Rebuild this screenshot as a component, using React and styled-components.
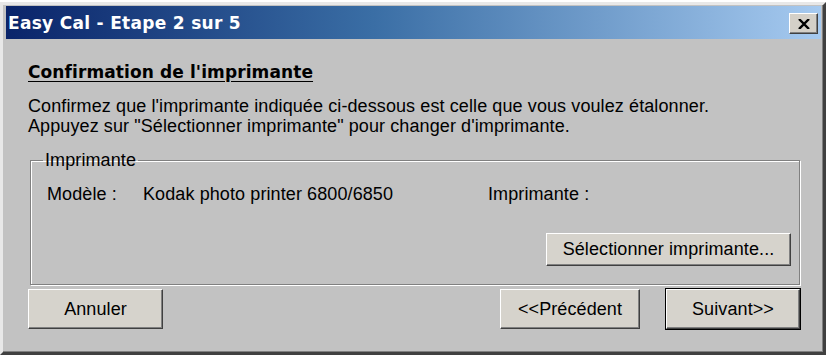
import React from 'react';
import styled, { createGlobalStyle } from 'styled-components';

const GlobalStyle = createGlobalStyle`
  body {
    margin: 0;
    background: #ffffff;
    font-family: "Liberation Sans", Arial, sans-serif;
  }
`;

const Window = styled.div`
  box-sizing: border-box;
  margin-top: 2px;
  width: 826px;
  height: 353px;
  background: #c2c2c2;
  border-top: 3px solid #e8e8e8;
  border-left: 3px solid #e8e8e8;
  border-right: 3px solid #404040;
  border-bottom: 3px solid #404040;
  box-shadow: inset -1px -1px 0 #808080;
  padding: 1px 2px 0 3px;
  display: flex;
  flex-direction: column;
`;

const TitleBar = styled.div`
  height: 33px;
  flex-shrink: 0;
  display: flex;
  align-items: center;
  justify-content: space-between;
  padding: 0 3px 0 2px;
  background: linear-gradient(to right, #0a246a 0%, #3a6ea5 45%, #a6caf0 100%);
`;

const Title = styled.span`
  color: #ffffff;
  font-family: "DejaVu Sans", Verdana, sans-serif;
  font-weight: bold;
  font-size: 17px;
  letter-spacing: 0.3px;
`;

const CloseButton = styled.div`
  box-sizing: border-box;
  width: 29px;
  height: 21px;
  margin-top: 2px;
  background: #d4d0c8;
  border-top: 1px solid #ffffff;
  border-left: 1px solid #ffffff;
  border-right: 1px solid #404040;
  border-bottom: 1px solid #404040;
  box-shadow: inset -1px -1px 0 #808080;
  display: flex;
  align-items: center;
  justify-content: center;
`;

const Body = styled.div`
  flex: 1;
  display: flex;
  flex-direction: column;
  padding: 22px 21px 0 22px;
  color: #000000;
  font-size: 18px;
  letter-spacing: 0.1px;
`;

const Heading = styled.h1`
  margin: 0;
  font-family: "DejaVu Sans", Verdana, sans-serif;
  font-size: 17px;
  font-weight: bold;
  letter-spacing: 0.1px;
  text-decoration: underline;
  text-underline-offset: 3px;
  line-height: 22px;
`;

const Text = styled.p`
  margin: 13px 0 0;
  line-height: 20px;
`;

const GroupBox = styled.fieldset`
  margin: 14px 0 0 2px;
  padding: 14px 8px 18px 16px;
  border: 1px solid #808080;
  box-shadow: inset 1px 1px 0 #ffffff, 1px 1px 0 #ffffff;
  display: flex;
  flex-direction: column;
`;

const Legend = styled.legend`
  padding: 0 2px;
  margin-left: -4px;
  line-height: 20px;
`;

const InfoRow = styled.div`
  display: flex;
  line-height: 20px;
`;

const Label = styled.span`
  width: ${({ $w }) => $w}px;
  flex-shrink: 0;
`;

const ButtonRow = styled.div`
  display: flex;
  justify-content: ${({ $justify }) => $justify || 'space-between'};
  align-items: center;
  margin-top: ${({ $top }) => $top || 0}px;
`;

const Button = styled.button`
  box-sizing: border-box;
  width: ${({ $w }) => $w}px;
  height: ${({ $h }) => $h || 40}px;
  background: #d6d3cc;
  font-family: "Liberation Sans", Arial, sans-serif;
  font-size: 18px;
  letter-spacing: 0.1px;
  color: #000000;
  padding: 0;
  border-top: 1px solid #ffffff;
  border-left: 1px solid #ffffff;
  border-right: 1px solid #404040;
  border-bottom: 1px solid #404040;
  box-shadow: ${({ $default }) =>
    $default
      ? '0 0 0 1px #000000, inset -1px -1px 0 #808080'
      : 'inset -1px -1px 0 #808080'};
`;

const NavGroup = styled.div`
  display: flex;
  gap: 26px;
`;

export default function App() {
  return (
    <>
      <GlobalStyle />
      <Window>
        <TitleBar>
          <Title>Easy Cal - Etape 2 sur 5</Title>
          <CloseButton>
            <svg width="12" height="10" viewBox="0 0 12 10">
              <path d="M1 0 L11 10 M11 0 L1 10" stroke="#000" strokeWidth="2.4" />
            </svg>
          </CloseButton>
        </TitleBar>
        <Body>
          <Heading>Confirmation de l'imprimante</Heading>
          <Text>
            Confirmez que l'imprimante indiquée ci-dessous est celle que vous voulez étalonner.
            <br />
            Appuyez sur "Sélectionner imprimante" pour changer d'imprimante.
          </Text>
          <GroupBox>
            <Legend>Imprimante</Legend>
            <InfoRow>
              <Label $w={96}>Modèle :</Label>
              <Label $w={345}>Kodak photo printer 6800/6850</Label>
              <span>Imprimante :</span>
            </InfoRow>
            <ButtonRow $justify="flex-end" $top={29}>
              <Button $w={245} $h={33}>Sélectionner imprimante...</Button>
            </ButtonRow>
          </GroupBox>
          <ButtonRow $top={4}>
            <Button $w={135}>Annuler</Button>
            <NavGroup>
              <Button $w={140}>&lt;&lt;Précédent</Button>
              <Button $w={134} $default>Suivant&gt;&gt;</Button>
            </NavGroup>
          </ButtonRow>
        </Body>
      </Window>
    </>
  );
}
